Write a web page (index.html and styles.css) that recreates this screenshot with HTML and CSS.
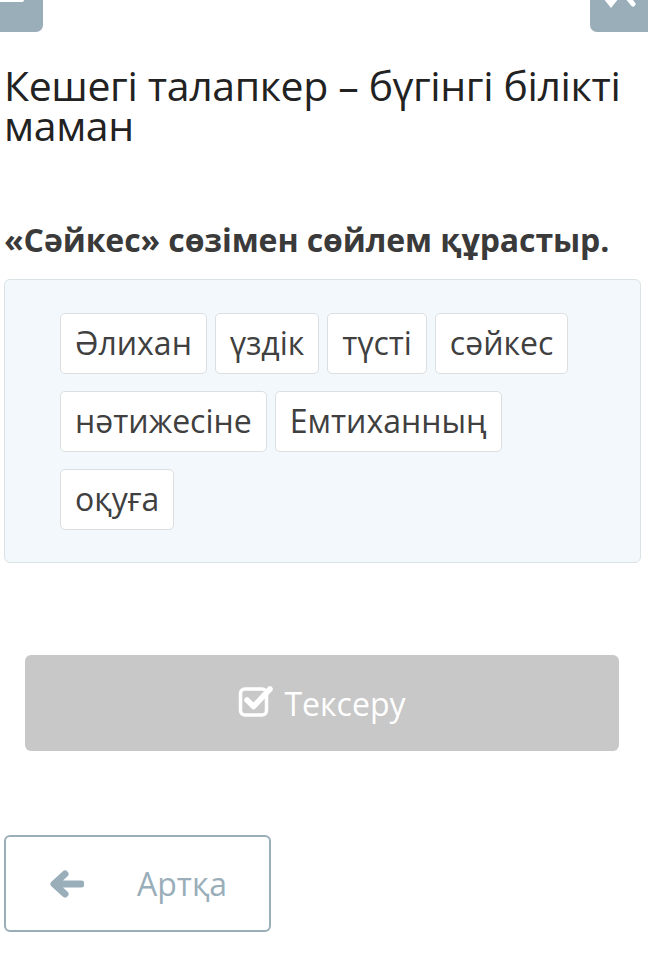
FILE: index.html
```html
<!DOCTYPE html>
<html lang="kk">
<head>
<meta charset="utf-8">
<title>Сәйкес</title>
<link rel="stylesheet" href="styles.css">
</head>
<body>
<div class="topbar">
  <div class="tab tab-left"><span class="tab-inner"></span></div>
  <div class="tab tab-right">
    <svg class="tab-icon" width="40" height="14" viewBox="0 0 40 14"><path d="M4 -6 L12 4 L20 -6 M26 -6 L34 4" fill="none" stroke="#fff" stroke-width="5" stroke-linecap="round"/></svg>
  </div>
</div>
<h1 class="title">Кешегі талапкер – бүгінгі білікті маман</h1>
<h2 class="task">«Сәйкес» сөзімен сөйлем құрастыр.</h2>
<div class="pool">
  <span class="chip">Әлихан</span>
  <span class="chip">үздік</span>
  <span class="chip">түсті</span>
  <span class="chip">сәйкес</span>
  <span class="chip">нәтижесіне</span>
  <span class="chip">Емтиханның</span>
  <span class="chip">оқуға</span>
</div>
<div class="check-wrap">
  <button class="check">
    <svg width="36" height="34" viewBox="0 0 36 34"><rect x="2.5" y="6" width="26" height="26" rx="4.5" fill="none" stroke="#fff" stroke-width="3.5"/><path d="M9 17 L15.5 23.5 L32 6" fill="none" stroke="#fff" stroke-width="5.5" stroke-linecap="round" stroke-linejoin="round"/></svg>
    <span>Тексеру</span>
  </button>
</div>
<div class="back-wrap">
  <button class="back">
    <svg width="34" height="28" viewBox="0 0 34 28"><path d="M31 14 H8 M15 4 L4 14 L15 24" fill="none" stroke="#9aaeb9" stroke-width="7" stroke-linecap="round" stroke-linejoin="round"/></svg>
    <span>Артқа</span>
  </button>
</div>
</body>
</html>
```
FILE: styles.css
```css
html, body {
  margin: 0;
  padding: 0;
  background: #fff;
}
body {
  width: 648px;
  height: 954px;
  overflow: hidden;
  font-family: "Open Sans", "Noto Sans", sans-serif;
  color: #3b3b3b;
}
.topbar {
  display: flex;
  justify-content: space-between;
  height: 32px;
}
.tab {
  background: #9aaeb9;
  height: 32px;
}
.tab-left {
  width: 43px;
  border-bottom-right-radius: 7px;
  position: relative;
}
.tab-inner {
  position: absolute;
  left: 0;
  top: 0;
  width: 24px;
  height: 2px;
  background: #fff;
  border-bottom-right-radius: 2px;
}
.tab-right {
  width: 58px;
  border-bottom-left-radius: 7px;
  display: flex;
  justify-content: center;
}
.tab-icon {
  display: block;
}
.title {
  margin: 33px 0 0 4px;
  font-weight: 400;
  font-size: 41px;
  line-height: 40px;
  color: #222;
  width: 640px;
  letter-spacing: -0.35px;
}
.task {
  margin: 76px 0 0 4px;
  font-weight: 700;
  font-size: 32px;
  line-height: 38px;
  color: #3a3a3a;
  letter-spacing: -0.1px;
}
.pool {
  margin: 20px 7px 0 4px;
  box-sizing: border-box;
  height: 284px;
  background: #f3f8fc;
  border: 1.5px solid #dbe2e6;
  border-radius: 6px;
  padding: 33px 40px 0 55px;
  display: flex;
  flex-wrap: wrap;
  align-content: flex-start;
  column-gap: 8px;
  row-gap: 17px;
}
.chip {
  display: block;
  box-sizing: border-box;
  height: 61px;
  line-height: 57px;
  padding: 0 14px;
  background: #fff;
  border: 1.5px solid #dcdfe0;
  border-radius: 5px;
  font-size: 32px;
  color: #404040;
}
.check-wrap {
  margin: 92px 29px 0 25px;
}
.check {
  width: 100%;
  height: 96px;
  border: none;
  border-radius: 6px;
  background: #c8c8c8;
  color: #fff;
  font-family: "Open Sans", "Noto Sans", sans-serif;
  font-size: 32px;
  display: flex;
  align-items: center;
  justify-content: center;
  gap: 10px;
  padding: 0;
}
.check svg {
  margin-top: -6px;
}
.back-wrap {
  margin: 84px 0 0 4px;
}
.back {
  box-sizing: border-box;
  width: 267px;
  height: 97px;
  border: 2px solid #9aaeb9;
  border-radius: 6px;
  background: #fff;
  display: flex;
  align-items: center;
  padding: 0 0 0 44px;
  gap: 53px;
  font-family: "Open Sans", "Noto Sans", sans-serif;
  font-size: 32px;
  color: #9aaeb9;
}
```
